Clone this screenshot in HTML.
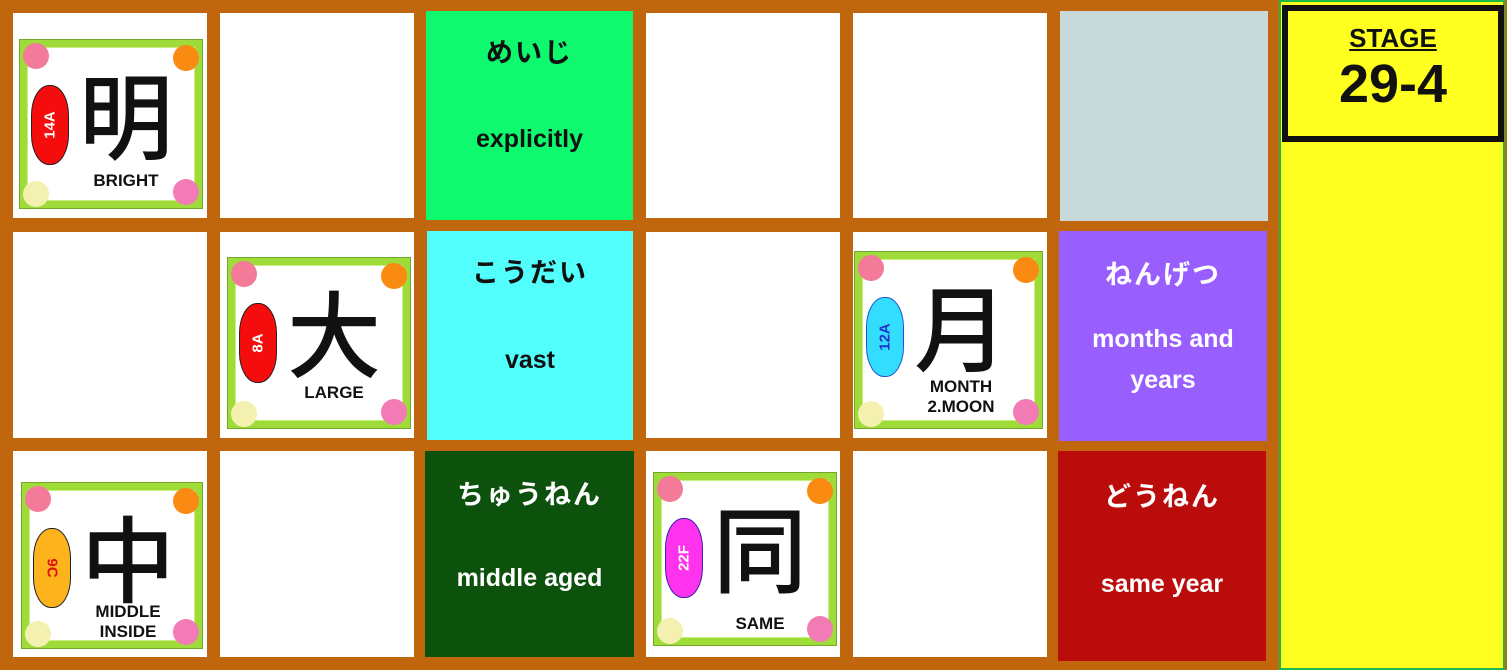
<!DOCTYPE html>
<html><head><meta charset="utf-8"><style>
body{margin:0;width:1507px;height:670px;overflow:hidden;background:#c0670e;position:relative;font-family:"Liberation Sans","Noto Sans CJK JP",sans-serif}
.c{position:absolute;background:#fff}
.t{position:absolute;color:#111;font-weight:bold;text-align:center;width:100%;left:0}
.jp{font-family:"Noto Sans CJK JP",sans-serif;font-size:27px;font-weight:bold;letter-spacing:2px}
.en{font-size:25px;font-weight:bold}
.fr{position:absolute;width:182px;height:168px;box-sizing:border-box;border:7px solid #9fdc3a;outline:1px solid #6fa82a;background:#fff}
.fr .in{position:absolute;inset:0;border:1px solid #c8ee80}
.fl{position:absolute;width:26px;height:26px;border-radius:50%}
.blob{position:absolute;left:4px;top:38px;width:36px;height:78px;border-radius:18px/30px;border:1px solid #222}
.blob span{position:absolute;left:50%;top:50%;transform:translate(-50%,-50%) rotate(-90deg);font-size:15px;font-weight:bold;white-space:nowrap}
.kj{position:absolute;left:34px;width:130px;text-align:center;top:10px;font-family:"Noto Sans CJK JP",sans-serif;font-size:94px;font-weight:500;line-height:110px;color:#111}
.lb{position:absolute;left:34px;width:130px;text-align:center;font-size:17px;font-weight:bold;line-height:20px;color:#111}
</style></head><body>
<div class="c" style="left:13px;top:13px;width:194px;height:205px"></div>
<div class="c" style="left:220px;top:13px;width:194px;height:205px"></div>
<div class="c" style="left:646px;top:13px;width:194px;height:205px"></div>
<div class="c" style="left:853px;top:13px;width:194px;height:205px"></div>
<div class="c" style="left:13px;top:232px;width:194px;height:206px"></div>
<div class="c" style="left:220px;top:232px;width:194px;height:206px"></div>
<div class="c" style="left:646px;top:232px;width:194px;height:206px"></div>
<div class="c" style="left:853px;top:232px;width:194px;height:206px"></div>
<div class="c" style="left:13px;top:451px;width:194px;height:206px"></div>
<div class="c" style="left:220px;top:451px;width:194px;height:206px"></div>
<div class="c" style="left:646px;top:451px;width:194px;height:206px"></div>
<div class="c" style="left:853px;top:451px;width:194px;height:206px"></div>
<div class="c" style="left:426px;top:11px;width:207px;height:209px;background:#0ef96e">
 <div class="t jp" style="top:20px">めいじ</div><div class="t en" style="top:114px">explicitly</div></div>
<div class="c" style="left:1060px;top:11px;width:208px;height:210px;background:#c8d9d9"></div>
<div class="c" style="left:427px;top:231px;width:206px;height:209px;background:#52fffd">
 <div class="t jp" style="top:20px">こうだい</div><div class="t en" style="top:115px">vast</div></div>
<div class="c" style="left:1059px;top:231px;width:208px;height:210px;background:#985ffe;color:#fff">
 <div class="t jp" style="top:22px;color:#fff">ねんげつ</div><div class="t en" style="top:88px;color:#fff;line-height:41px">months and<br>years</div></div>
<div class="c" style="left:425px;top:451px;width:209px;height:206px;background:#0c510c">
 <div class="t jp" style="top:22px;color:#fff">ちゅうねん</div><div class="t en" style="top:113px;color:#fff">middle aged</div></div>
<div class="c" style="left:1058px;top:451px;width:208px;height:210px;background:#bb0c0c">
 <div class="t jp" style="top:24px;color:#fff">どうねん</div><div class="t en" style="top:119px;color:#fff">same year</div></div>
<div style="position:absolute;left:1279px;top:0;width:226px;height:670px;box-sizing:border-box;border:2px solid #1db84a;background:#ffff20"></div>
<div style="position:absolute;left:1282px;top:5px;width:222px;height:137px;box-sizing:border-box;border:6px solid #111;background:#ffff20;text-align:center">
 <div style="margin-top:12px;font-size:26px;font-weight:bold;text-decoration:underline;color:#111">STAGE</div>
 <div style="font-size:54px;font-weight:bold;color:#111;line-height:60px">29-4</div></div>

<div class="fr" style="left:20px;top:40px"><div class="in"></div>
 <div class="fl" style="left:-4px;top:-4px;background:#f47a9a"></div><div class="fl" style="right:-4px;top:-2px;background:#f98a12"></div>
 <div class="fl" style="left:-4px;bottom:-6px;background:#f3f0b0"></div><div class="fl" style="right:-4px;bottom:-4px;background:#f27bb5"></div>
 <div class="blob" style="background:#f50c0c"><span style="color:#fff">14A</span></div>
 <div class="kj">明</div><div class="lb" style="top:124px">BRIGHT</div></div>

<div class="fr" style="left:228px;top:258px;height:170px"><div class="in"></div>
 <div class="fl" style="left:-4px;top:-4px;background:#f47a9a"></div><div class="fl" style="right:-4px;top:-2px;background:#f98a12"></div>
 <div class="fl" style="left:-4px;bottom:-6px;background:#f3f0b0"></div><div class="fl" style="right:-4px;bottom:-4px;background:#f27bb5"></div>
 <div class="blob" style="background:#f50c0c"><span style="color:#fff">8A</span></div>
 <div class="kj">大</div><div class="lb" style="top:118px">LARGE</div></div>

<div class="fr" style="left:855px;top:252px;height:176px;width:187px"><div class="in"></div>
 <div class="fl" style="left:-4px;top:-4px;background:#f47a9a"></div><div class="fl" style="right:-4px;top:-2px;background:#f98a12"></div>
 <div class="fl" style="left:-4px;bottom:-6px;background:#f3f0b0"></div><div class="fl" style="right:-4px;bottom:-4px;background:#f27bb5"></div>
 <div class="blob" style="background:#33ddff;border-color:#2255cc"><span style="color:#2233cc">12A</span></div>
 <div class="kj">月</div><div class="lb" style="top:118px">MONTH<br>2.MOON</div></div>

<div class="fr" style="left:22px;top:483px;height:165px;width:180px"><div class="in"></div>
 <div class="fl" style="left:-4px;top:-4px;background:#f47a9a"></div><div class="fl" style="right:-4px;top:-2px;background:#f98a12"></div>
 <div class="fl" style="left:-4px;bottom:-6px;background:#f3f0b0"></div><div class="fl" style="right:-4px;bottom:-4px;background:#f27bb5"></div>
 <div class="blob" style="background:#fcb31c"><span style="color:#e01010;transform:translate(-50%,-50%) rotate(90deg)">9C</span></div>
 <div class="kj">中</div><div class="lb" style="top:112px">MIDDLE<br>INSIDE</div></div>

<div class="fr" style="left:654px;top:473px;height:172px"><div class="in"></div>
 <div class="fl" style="left:-4px;top:-4px;background:#f47a9a"></div><div class="fl" style="right:-4px;top:-2px;background:#f98a12"></div>
 <div class="fl" style="left:-4px;bottom:-6px;background:#f3f0b0"></div><div class="fl" style="right:-4px;bottom:-4px;background:#f27bb5"></div>
 <div class="blob" style="background:#ff33ee;border-color:#3322aa"><span style="color:#fff">22F</span></div>
 <div class="kj">同</div><div class="lb" style="top:134px">SAME</div></div>
</body></html>
